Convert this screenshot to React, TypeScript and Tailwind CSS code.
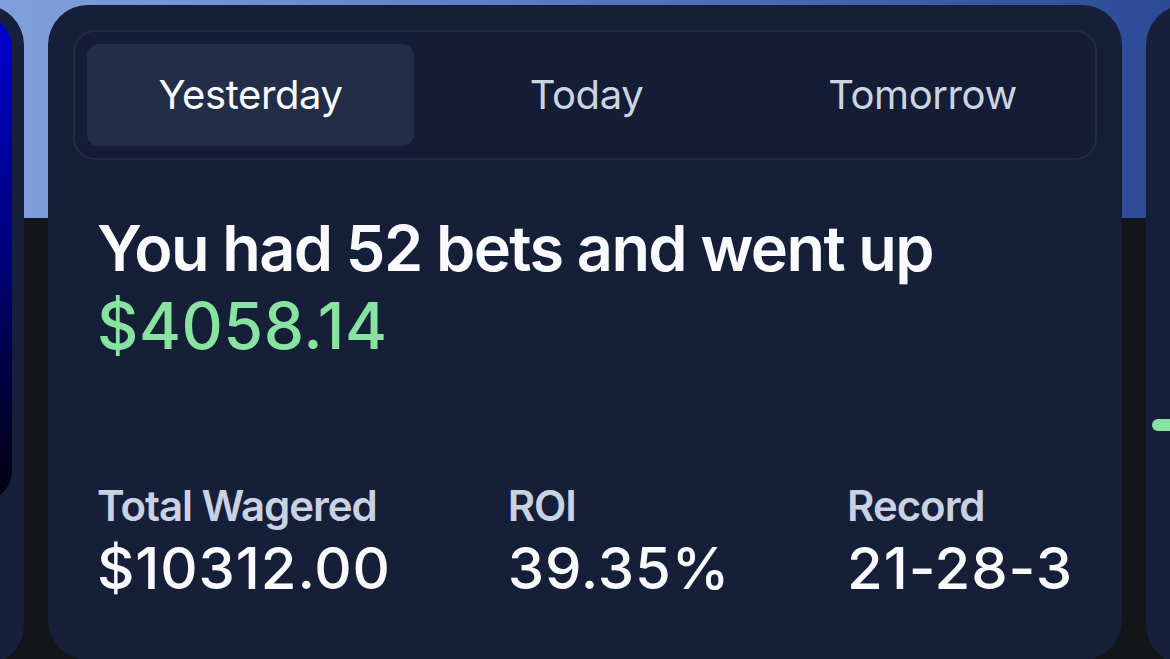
import { useState } from 'react'

const tabs = ['Yesterday', 'Today', 'Tomorrow']

const stats = [
  { label: 'Total Wagered', value: '$10312.00' },
  { label: 'ROI', value: '39.35%' },
  { label: 'Record', value: '21-28-3' },
]

export default function App() {
  const [active, setActive] = useState('Yesterday')

  return (
    <div
      className="h-[659px] w-[1170px] overflow-hidden bg-[linear-gradient(transparent_218px,#131619_218px),linear-gradient(to_right,#80a0db,#5a7cc6_45%,#2c4a96)]"
      style={{ fontFamily: 'Inter, "Noto Sans", sans-serif' }}
    >
      <div className="flex justify-center gap-6 pt-[5px]">
        {/* previous card */}
        <div className="h-[660px] w-[1074px] shrink-0 rounded-[40px] bg-[#16203a] p-3 pt-3">
          <div className="h-[484px] rounded-[30px] bg-gradient-to-b from-[#0000d4] via-[#00007a] to-[#000010]" />
        </div>

        {/* main card */}
        <div className="h-[655px] w-[1074px] shrink-0 rounded-[40px] bg-[#151f38] px-[25px] pt-[25px]">
          <div className="flex h-[130px] gap-[9px] rounded-[22px] border-2 border-[#222c45] bg-[#141d35] py-3 pl-3 pr-[9px]">
            {tabs.map((t) => (
              <button
                key={t}
                onClick={() => setActive(t)}
                className={`flex flex-1 items-center justify-center rounded-[12px] text-[40px] leading-none tracking-[-0.01em] ${
                  active === t ? 'bg-[#222e48] text-[#f8fafc]' : 'text-[#cbd5e1]'
                }`}
              >
                {t}
              </button>
            ))}
          </div>

          <div className="px-6">
            <div className="mt-[50px] text-[63px] font-semibold leading-[77px] tracking-[-0.025em] text-[#f8fafc]">
              You had 52 bets and went up
            </div>
            <div className="text-[64px] font-medium leading-[77px] tracking-[0.01em] text-[#88e3a0]">
              $4058.14
            </div>

            <div className="mt-[115px] flex justify-between">
              {stats.map((s) => (
                <div key={s.label}>
                  <div className="text-[42px] font-semibold leading-[53px] tracking-[-0.025em] text-[#cad2e2]">
                    {s.label}
                  </div>
                  <div className="mt-[2px] text-[58px] font-medium leading-[68px] tracking-[0.015em] text-[#f8fafc]">
                    {s.value}
                  </div>
                </div>
              ))}
            </div>
          </div>
        </div>

        {/* next card */}
        <div className="h-[660px] w-[1074px] shrink-0 rounded-[40px] bg-[#16203a] pl-[6px] pt-[414px]">
          <div className="h-3 w-20 rounded-full bg-[#88e3a0]" />
        </div>
      </div>
    </div>
  )
}
